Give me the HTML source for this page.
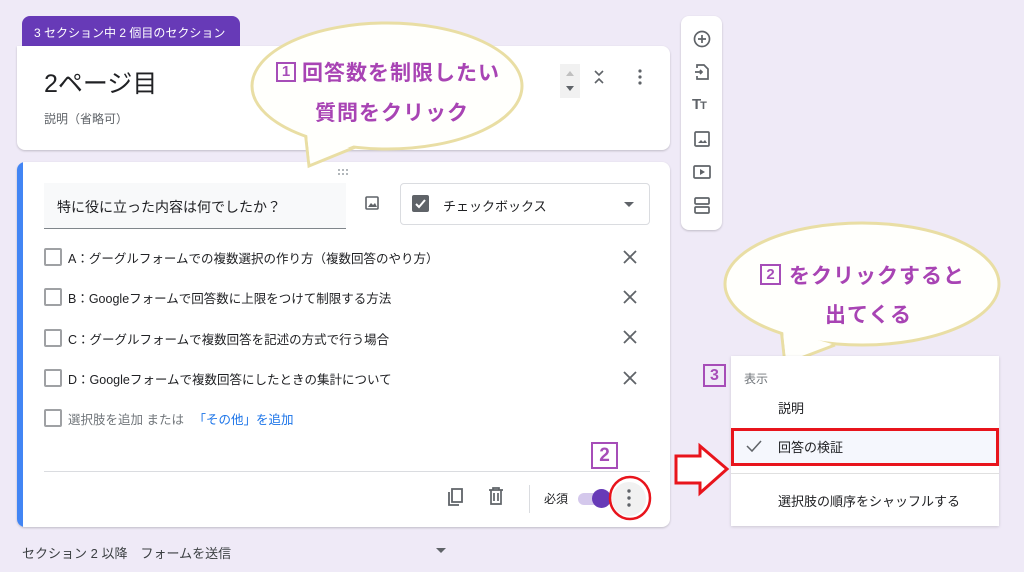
<!DOCTYPE html>
<html><head><meta charset="utf-8">
<style>
*{margin:0;padding:0;box-sizing:border-box}
body{width:1024px;height:572px;overflow:hidden;background:#efeaf7;font-family:"Liberation Sans","Noto Sans CJK JP",sans-serif;position:relative;color:#202124}
.abs{position:absolute}
.card{position:absolute;background:#fff;border-radius:8px;box-shadow:0 1px 2px rgba(0,0,0,.2)}
.cb{position:absolute;width:18px;height:18px;border:2px solid #5f6368;border-radius:2px;opacity:.6}
.opt{position:absolute;left:68px;font-size:12.5px;color:#202124}
.x{position:absolute;left:622px;width:16px;height:16px}
.num{position:absolute;border:2px solid #a64db8;color:#a64db8;font-weight:bold;text-align:center}
.bt{position:absolute;color:#a844b4;font-weight:bold;font-size:21px;letter-spacing:1px;white-space:nowrap}
</style></head><body>

<div class="abs" style="left:22px;top:16px;width:218px;height:32px;background:#673ab7;border-radius:8px 8px 0 0;color:#fff;font-size:12px;padding:8px 0 0 12px">3 セクション中 2 個目のセクション</div>

<div class="card" style="left:17px;top:46px;width:653px;height:104px;border-radius:0 8px 8px 8px">
  <div class="abs" style="left:27px;top:18px;font-size:25px;color:#202124">2ページ目</div>
  <div class="abs" style="left:27px;top:64px;font-size:12px;color:#5f6368">説明（省略可）</div>
  <div class="abs" style="left:543px;top:18px;width:20px;height:34px;background:#f1f1f1"></div>
  <svg class="abs" style="left:543px;top:18px" width="20" height="34"><path d="M6 12 L10 7 L14 12Z" fill="#c0c0c0"/><path d="M6 22 L10 27 L14 22Z" fill="#5f6368"/></svg>
  <svg class="abs" style="left:575px;top:22px" width="14" height="18"><path d="M3 3 L7 7 L11 3 M3 15 L7 11 L11 15" stroke="#5f6368" stroke-width="1.6" fill="none"/></svg>
  <svg class="abs" style="left:619px;top:22px" width="8" height="18"><circle cx="4" cy="3" r="1.6" fill="#5f6368"/><circle cx="4" cy="9" r="1.6" fill="#5f6368"/><circle cx="4" cy="15" r="1.6" fill="#5f6368"/></svg>
</div>

<div class="card" style="left:17px;top:162px;width:653px;height:365px;overflow:hidden">
  <div class="abs" style="left:0;top:0;width:6px;height:365px;background:#4285f4"></div>
  <svg class="abs" style="left:320px;top:6px" width="14" height="8"><g fill="#9aa0a6"><circle cx="2" cy="2" r="1"/><circle cx="6" cy="2" r="1"/><circle cx="10" cy="2" r="1"/><circle cx="2" cy="6" r="1"/><circle cx="6" cy="6" r="1"/><circle cx="10" cy="6" r="1"/></g></svg>
  <div class="abs" style="left:27px;top:21px;width:302px;height:46px;background:#f8f9fa;border-bottom:1px solid #80868b;font-size:14px;padding:14px 0 0 13px">特に役に立った内容は何でしたか？</div>
  <svg class="abs" style="left:348px;top:34px" width="14" height="14"><rect x="1" y="1" width="12" height="12" rx="1" fill="none" stroke="#5f6368" stroke-width="1.6"/><path d="M3 11 L6 7 L8 9 L10 7 L12 11Z" fill="#5f6368"/></svg>
  <div class="abs" style="left:383px;top:21px;width:250px;height:42px;border:1px solid #dadce0;border-radius:4px">
    <div class="abs" style="left:11px;top:11px;width:17px;height:17px;background:#5f6368;border-radius:2px"></div>
    <svg class="abs" style="left:11px;top:11px" width="17" height="17"><path d="M4 9 L7 12 L13 5" stroke="#fff" stroke-width="2" fill="none"/></svg>
    <div class="abs" style="left:42px;top:12px;font-size:13px">チェックボックス</div>
    <svg class="abs" style="left:223px;top:18px" width="10" height="6"><path d="M0 0 L10 0 L5 5Z" fill="#5f6368"/></svg>
  </div>
</div>

<div class="cb" style="left:44px;top:248px"></div><div class="opt" style="top:248px">A：グーグルフォームでの複数選択の作り方（複数回答のやり方）</div>
<div class="cb" style="left:44px;top:288px"></div><div class="opt" style="top:288px">B：Googleフォームで回答数に上限をつけて制限する方法</div>
<div class="cb" style="left:44px;top:329px"></div><div class="opt" style="top:329px">C：グーグルフォームで複数回答を記述の方式で行う場合</div>
<div class="cb" style="left:44px;top:369px"></div><div class="opt" style="top:369px">D：Googleフォームで複数回答にしたときの集計について</div>
<div class="cb" style="left:44px;top:409px"></div><div class="opt" style="top:409px;color:#70757a">選択肢を追加 または <span style="color:#1a73e8;margin-left:6px">「その他」を追加</span></div>
<svg class="x" style="top:249px"><path d="M2 2 L14 14 M14 2 L2 14" stroke="#5f6368" stroke-width="1.8"/></svg>
<svg class="x" style="top:289px"><path d="M2 2 L14 14 M14 2 L2 14" stroke="#5f6368" stroke-width="1.8"/></svg>
<svg class="x" style="top:329px"><path d="M2 2 L14 14 M14 2 L2 14" stroke="#5f6368" stroke-width="1.8"/></svg>
<svg class="x" style="top:370px"><path d="M2 2 L14 14 M14 2 L2 14" stroke="#5f6368" stroke-width="1.8"/></svg>

<div class="abs" style="left:44px;top:471px;width:606px;height:1px;background:#dadce0"></div>
<svg class="abs" style="left:446px;top:487px" width="20" height="20"><path d="M6 2 H16 V15 H6Z M3 5 V18 H13" fill="none" stroke="#5f6368" stroke-width="1.8"/></svg>
<svg class="abs" style="left:488px;top:487px" width="16" height="18"><path d="M1 3 H15 M5 3 V1 H11 V3 M3 3 V17 H13 V3 M6 6 V14 M10 6 V14" fill="none" stroke="#5f6368" stroke-width="1.7"/></svg>
<div class="abs" style="left:529px;top:485px;width:1px;height:28px;background:#dadce0"></div>
<div class="abs" style="left:544px;top:490px;font-size:12px;color:#202124">必須</div>
<div class="abs" style="left:578px;top:493px;width:30px;height:12px;border-radius:6px;background:#d4c8ec"></div>
<div class="abs" style="left:592px;top:489px;width:19px;height:19px;border-radius:50%;background:#673ab7"></div>
<div class="abs" style="left:612px;top:482px;width:34px;height:34px;border-radius:50%;background:#f1f1f1"></div>
<svg class="abs" style="left:625px;top:488px" width="8" height="20"><circle cx="4" cy="3" r="1.7" fill="#5f6368"/><circle cx="4" cy="10" r="1.7" fill="#5f6368"/><circle cx="4" cy="17" r="1.7" fill="#5f6368"/></svg>
<svg class="abs" style="left:606px;top:474px" width="48" height="48"><ellipse cx="24" cy="24" rx="20" ry="21" fill="none" stroke="#e8141c" stroke-width="2.5"/></svg>
<div class="num" style="left:591px;top:442px;width:27px;height:27px;font-size:19px;line-height:23px">2</div>

<div class="abs" style="left:22px;top:543px;font-size:13px;color:#3c4043">セクション 2 以降　フォームを送信</div>
<svg class="abs" style="left:436px;top:548px" width="10" height="6"><path d="M0 0 L10 0 L5 5Z" fill="#5f6368"/></svg>

<div class="card" style="left:681px;top:16px;width:41px;height:214px">
  <svg class="abs" style="left:12px;top:14px" width="18" height="18"><circle cx="9" cy="9" r="7.5" fill="none" stroke="#5f6368" stroke-width="1.7"/><path d="M9 5 V13 M5 9 H13" stroke="#5f6368" stroke-width="1.7"/></svg>
  <svg class="abs" style="left:13px;top:47px" width="16" height="18"><path d="M3 5 V2 H10 L14 6 V16 H3 V13 M1 9 H8 M6 7 L8 9 L6 11" fill="none" stroke="#5f6368" stroke-width="1.7"/></svg>
  <div class="abs" style="left:11px;top:80px;font-size:15px;font-weight:bold;color:#5f6368;letter-spacing:-1px">T<span style="font-size:11px">T</span></div>
  <svg class="abs" style="left:12px;top:114px" width="18" height="18"><rect x="2" y="2" width="14" height="14" rx="1" fill="none" stroke="#5f6368" stroke-width="1.7"/><path d="M5 13 L8 10 L10 12 L12 10 L14 13Z" fill="#5f6368"/></svg>
  <svg class="abs" style="left:12px;top:148px" width="18" height="16"><rect x="1" y="2" width="16" height="12" rx="1" fill="none" stroke="#5f6368" stroke-width="1.7"/><path d="M7 5 L12 8 L7 11Z" fill="#5f6368"/></svg>
  <svg class="abs" style="left:12px;top:180px" width="18" height="20"><rect x="2" y="2" width="14" height="6" rx="1" fill="none" stroke="#5f6368" stroke-width="1.7"/><rect x="2" y="11" width="14" height="6" rx="1" fill="none" stroke="#5f6368" stroke-width="1.7"/></svg>
</div>

<!-- bubble 1 -->
<svg class="abs" style="left:180px;top:15px" width="360" height="160"><path d="M125 115 L129 151 L178 131" fill="#fffffc" stroke="#e9dea4" stroke-width="3"/><ellipse cx="207" cy="71" rx="135" ry="63" fill="#fffffc" stroke="#e9dea4" stroke-width="3"/><path d="M127 118 L130 147 L175 130" fill="#fffffc"/></svg>
<div class="num" style="left:276px;top:62px;width:20px;height:20px;font-size:15px;line-height:16px">1</div>
<div class="bt" style="left:302px;top:57px">回答数を制限したい</div>
<div class="bt" style="left:315px;top:97px">質問をクリック</div>

<!-- bubble 2 -->
<svg class="abs" style="left:720px;top:218px" width="300" height="150"><path d="M61 110 L65 146 L115 127" fill="#fffffc" stroke="#e9dea4" stroke-width="3"/><ellipse cx="142" cy="66" rx="137" ry="61" fill="#fffffc" stroke="#e9dea4" stroke-width="3"/><path d="M63 112 L66 142 L112 126" fill="#fffffc"/></svg>
<div class="num" style="left:760px;top:264px;width:21px;height:21px;font-size:15px;line-height:17px">2</div>
<div class="bt" style="left:789px;top:260px">をクリックすると</div>
<div class="bt" style="left:825px;top:299px">出てくる</div>

<!-- menu -->
<div class="abs" style="left:731px;top:356px;width:268px;height:170px;background:#fff;box-shadow:0 1px 3px rgba(0,0,0,.15)">
  <div class="abs" style="left:13px;top:14px;font-size:12px;color:#70757a">表示</div>
  <div class="abs" style="left:47px;top:42px;font-size:13px">説明</div>
  <div class="abs" style="left:0;top:72px;width:268px;height:38px;background:#f5f7fd;border:3px solid #e8141c"></div>
  <svg class="abs" style="left:14px;top:83px" width="18" height="14"><path d="M2 7 L7 12 L16 2" fill="none" stroke="#5f6368" stroke-width="1.5"/></svg>
  <div class="abs" style="left:47px;top:81px;font-size:13px">回答の検証</div>
  <div class="abs" style="left:0;top:117px;width:268px;height:1px;background:#e0e0e0"></div>
  <div class="abs" style="left:47px;top:135px;font-size:13px">選択肢の順序をシャッフルする</div>
</div>
<div class="num" style="left:703px;top:364px;width:23px;height:23px;font-size:16px;line-height:19px">3</div>

<svg class="abs" style="left:672px;top:442px" width="60" height="56"><path d="M4 14 H28 V4 L55 27 L28 51 V41 H4Z" fill="#fff" stroke="#e8141c" stroke-width="3" stroke-linejoin="miter"/></svg>

</body></html>
